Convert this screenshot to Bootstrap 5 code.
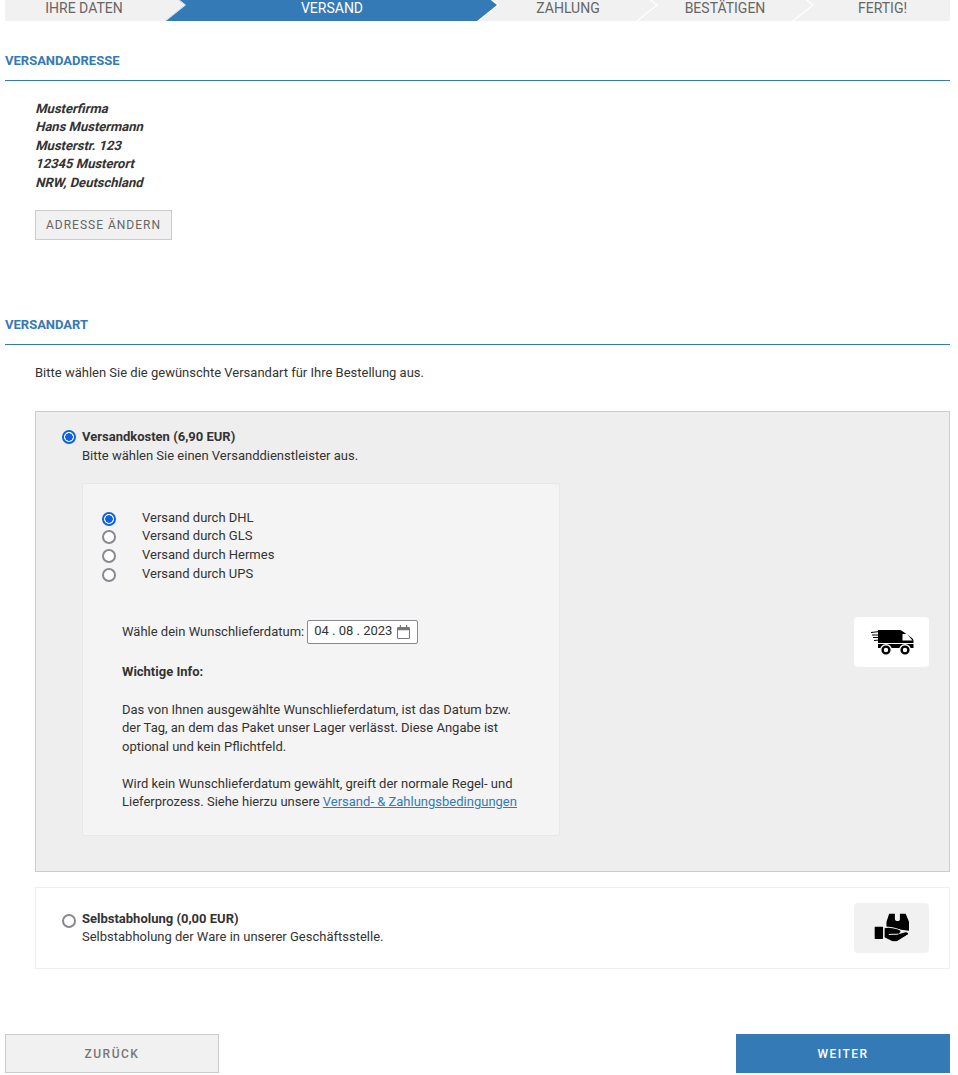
<!DOCTYPE html>
<html lang="de">
<head>
    <meta charset="UTF-8">
    <meta name="viewport" content="width=device-width, initial-scale=1.0">
    <title>Versand</title>
    <link href="https://cdn.jsdelivr.net/npm/bootstrap@5.3.2/dist/css/bootstrap.min.css" rel="stylesheet">
    <style>
        body {
            font-family: Roboto, "Liberation Sans", sans-serif;
            font-size: 13px;
            line-height: 1.42857;
            color: #333;
        }
        .page-wrap {
            padding: 0 8px 0 5px;
        }

        /* Checkout steps, top of the arrows is scrolled away */
        .steps-clip {
            height: 21px;
            overflow: hidden;
            background-color: #f1f1f1;
        }
        .steps-row {
            height: 32px;
            margin-top: -11px;
        }
        .step-item {
            position: relative;
            height: 32px;
            line-height: 38px;
            font-size: 14px;
            color: #666;
            text-align: center;
            text-transform: uppercase;
            flex: none;
        }
        .step-item.arrow-after::after,
        .step-item.arrow-before::before {
            content: "";
            position: absolute;
            top: 0;
            width: 22px;
            height: 32px;
            background-color: #fff;
            clip-path: polygon(0 0, 2px 0, 22px 50%, 2px 100%, 0 100%, 20px 50%);
        }
        .step-item.arrow-after::after { right: -21px; z-index: 2; }
        .step-item.arrow-before::before { left: 0; }
        .step-first { width: 160px; padding-right: 2px; }
        .step-first.arrow-after::after {
            width: 21px;
            clip-path: polygon(0 0, 1px 0, 21px 50%, 1px 100%, 0 100%, 20px 50%);
        }
        .step-active {
            width: 332px;
            margin-right: -20px;
            padding-left: 2px;
            color: #fff;
            background-color: #337ab7;
            clip-path: polygon(0 0, 312px 0, 332px 50%, 312px 100%, 0 100%, 20px 50%);
            z-index: 1;
        }
        .step-pay { width: 160px; padding-left: 22px; }
        .step-confirm { width: 156px; padding-left: 20px; }
        .step-done { width: 157px; padding-left: 22px; }

        .section-head {
            font-size: 13px;
            font-weight: 700;
            color: #337ab7;
            text-transform: uppercase;
            line-height: 19px;
            padding-bottom: 10px;
            border-bottom: 1px solid #337ab7;
        }
        .head-address { margin-top: 30px; }
        .head-shipping { margin-top: 75px; }
        .section-body { padding-left: 30px; }
        .address-lines {
            margin-top: 18.5px;
            font-weight: 700;
        }
        /* the slanted bold of the reference is wider than Roboto's real italic */
        .address-line {
            height: 18.57px;
            transform: skewX(-14deg);
            transform-origin: 0 75%;
        }
        .btn-change {
            margin-top: 17.5px;
            height: 30px;
            padding: 0 10px;
            font-size: 12px;
            letter-spacing: 1px;
            line-height: 28px;
            color: #666;
            background-color: #f1f1f1;
            border: 1px solid #ccc;
            border-radius: 0;
        }
        .intro-text { margin: 19px 0 29px; }

        .ship-box {
            display: flex;
            margin-left: 30px;
            border: 1px solid #ccc;
            background-color: #eee;
            padding: 16px 20px 35px 26px;
        }
        .ship-box.ship-plain {
            margin-top: 15px;
            padding: 15px 20px 15px 26px;
            background-color: #fff;
            border-color: #eee;
        }
        .ship-radio {
            appearance: none;
            width: 14px;
            height: 14px;
            margin: 2px 6px 0 0;
            flex: none;
            background-color: #fff;
            border: 2px solid #8a8894;
            border-radius: 50%;
        }
        .ship-radio:checked {
            border-color: #0f62d9;
            background: radial-gradient(circle, #0f62d9 0 3.5px, #fff 4px);
        }
        .ship-main { flex: 1 1 auto; }
        .ship-plain .ship-main { align-self: center; padding-top: .4px; }
        .ship-plain > .ship-radio { align-self: center; margin-top: 0; position: relative; top: -7px; }
        .icon-tile {
            flex: none;
            width: 75px;
            height: 50px;
            border-radius: 4px;
            align-self: center;
            background-color: #fff;
        }
        .truck-tile { margin-top: 20px; }
        .ship-box.ship-plain .icon-tile { background-color: #f1f1f1; }
        .carrier-panel {
            width: 478px;
            margin-top: 17.4px;
            padding: 25px 39px 23.2px 19px;
            background-color: #f4f4f4;
            border: 1px solid #e8e8e8;
            border-radius: 2px;
        }
        .carrier-row { display: flex; }
        .carrier-row .ship-radio {
            margin: 3px 26px 0 0;
        }
        .date-row {
            margin: 36.6px 0 0 20px;
        }
        .date-field {
            display: inline-flex;
            align-items: center;
            width: 111px;
            height: 24px;
            margin-left: 3px;
            padding: 0 6px;
            color: #333;
            background-color: #fff;
            border: 1px solid #8a8894;
            border-radius: 2px;
        }
        .date-field svg { margin-left: 5px; }
        .info-block {
            margin: 19px 0 0 20px;
        }
        .info-block p { margin: 0 0 19.6px; }
        .info-block p:nth-child(2) { margin-bottom: 18px; }
        .info-block p:last-child { margin: 0; }
        .info-block a { color: #337ab7; }

        .bottom-nav { margin-top: 65px; }
        .btn-step {
            width: 214px;
            height: 39px;
            padding: 1px 0 0;
            font-size: 12px;
            font-weight: 500;
            letter-spacing: 1.5px;
            border-radius: 0;
            line-height: 36px;
        }
        .btn-back {
            color: #777;
            background-color: #f1f1f1;
            border: 1px solid #ccc;
        }
        .btn-next {
            color: #fff;
            background-color: #337ab7;
            border: 1px solid #337ab7;
        }
    </style>
</head>
<body>
    <div class="page-wrap">
        <!-- Steps -->
        <div class="steps-clip">
            <div class="steps-row d-flex">
                <div class="step-item step-first arrow-after">Ihre Daten</div>
                <div class="step-item step-active">Versand</div>
                <div class="step-item step-pay arrow-before arrow-after">Zahlung</div>
                <div class="step-item step-confirm arrow-after">Bestätigen</div>
                <div class="step-item step-done">Fertig!</div>
            </div>
        </div>

        <!-- Address -->
        <div class="section-head head-address">Versandadresse</div>
        <div class="section-body">
            <div class="address-lines">
                <div class="address-line">Musterfirma</div>
                <div class="address-line">Hans Mustermann</div>
                <div class="address-line">Musterstr. 123</div>
                <div class="address-line">12345 Musterort</div>
                <div class="address-line">NRW, Deutschland</div>
            </div>
            <button type="button" class="btn btn-change">ADRESSE ÄNDERN</button>
        </div>

        <!-- Shipping -->
        <div class="section-head head-shipping">Versandart</div>
        <div class="section-body">
            <p class="intro-text">Bitte wählen Sie die gewünschte Versandart für Ihre Bestellung aus.</p>
        </div>

        <div class="ship-box">
            <input class="ship-radio" type="radio" name="ship" checked>
            <div class="ship-main">
                <div class="fw-bold">Versandkosten (6,90 EUR)</div>
                <div>Bitte wählen Sie einen Versanddienstleister aus.</div>
                <div class="carrier-panel">
                    <div class="carrier-row"><input class="ship-radio" type="radio" name="carrier" checked><span>Versand durch DHL</span></div>
                    <div class="carrier-row"><input class="ship-radio" type="radio" name="carrier"><span>Versand durch GLS</span></div>
                    <div class="carrier-row"><input class="ship-radio" type="radio" name="carrier"><span>Versand durch Hermes</span></div>
                    <div class="carrier-row"><input class="ship-radio" type="radio" name="carrier"><span>Versand durch UPS</span></div>
                    <div class="date-row">Wähle dein Wunschlieferdatum:<span class="date-field">04 . 08 . 2023
                        <svg width="13" height="14" viewBox="0 0 14 15"><path d="M3 0h1.300v2h5.400V0H11v2h1.500Q14 2 14 3.500v10q0 1.500-1.500 1.500h-11Q0 15 0 13.500v-10Q0 2 1.500 2H3zM1.100 5.600v7.900q0 .4.400.4h11q.4 0 .4-.4V5.600z" fill="#777"/></svg>
                    </span></div>
                    <div class="info-block">
                        <p class="fw-bold">Wichtige Info:</p>
                        <p>Das von Ihnen ausgewählte Wunschlieferdatum, ist das Datum bzw. der Tag, an dem das Paket unser Lager verlässt. Diese Angabe ist optional und kein Pflichtfeld.</p>
                        <p>Wird kein Wunschlieferdatum gewählt, greift der normale Regel- und Lieferprozess. Siehe hierzu unsere <a href="#">Versand- &amp; Zahlungsbedingungen</a></p>
                    </div>
                </div>
            </div>
            <div class="icon-tile truck-tile d-flex align-items-center justify-content-center">
                <svg width="44" height="28" viewBox="0 0 44 28">
                    <path d="M8 2h21q2 0 3.500 1.200L42 10q1.500 1 1.500 3v7H8z" fill="#000"/>
                    <path d="M32.500 6h4.500l5.500 6.500h-10z" fill="#fff"/>
                    <path d="M8 15.500h36" stroke="#fff" stroke-width="1.200"/>
                    <path d="M1 4.500l9-1M2 7h8M3 9.500h7M4 12.500l6-.5" stroke="#000" stroke-width="1.100"/>
                    <circle cx="16" cy="22" r="6" fill="#fff"/>
                    <circle cx="35" cy="22" r="6" fill="#fff"/>
                    <circle cx="16" cy="22" r="3.400" fill="#fff" stroke="#000" stroke-width="2.400"/>
                    <circle cx="35" cy="22" r="3.400" fill="#fff" stroke="#000" stroke-width="2.400"/>
                </svg>
            </div>
        </div>

        <div class="ship-box ship-plain">
            <input class="ship-radio" type="radio" name="ship">
            <div class="ship-main">
                <div class="fw-bold">Selbstabholung (0,00 EUR)</div>
                <div>Selbstabholung der Ware in unserer Geschäftsstelle.</div>
            </div>
            <div class="icon-tile d-flex align-items-center justify-content-center">
                <svg width="37" height="31" viewBox="100 52 110 92">
                    <path d="M148 57h17v14q0 8 8 8t7-8V57h17l10 24v27l-36-5-31-8V82z" fill="#000"/>
                    <rect x="105" y="96" width="25" height="36" rx="2" fill="#000"/>
                    <path d="M133 99c17-6 32 1 45 5 8 4 6 10 0 12l12-4c10-4 18 0 15 7l-30 19c-7 4-15 3-22 0l-20-10z" fill="#000" stroke="#f1f1f1" stroke-width="3"/>
                    <path d="M147 119c8-2 18 0 29-2" fill="none" stroke="#f1f1f1" stroke-width="3"/>
                </svg>
            </div>
        </div>

        <!-- Bottom buttons -->
        <div class="bottom-nav d-flex justify-content-between">
            <button type="button" class="btn btn-step btn-back">ZURÜCK</button>
            <button type="button" class="btn btn-step btn-next">WEITER</button>
        </div>
    </div>
    <script src="https://cdn.jsdelivr.net/npm/bootstrap@5.3.2/dist/js/bootstrap.bundle.min.js"></script>
</body>
</html>
